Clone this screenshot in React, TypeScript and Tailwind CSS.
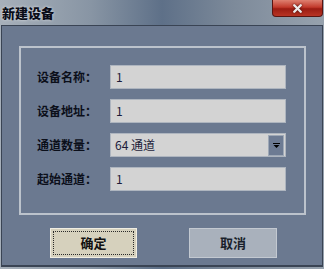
import { X } from 'lucide-react';

const font = { fontFamily: '"Noto Sans CJK SC", "Liberation Sans", sans-serif' };

function Field({ label, value }: { label: string; value: string }) {
    return (
        <div className="flex items-center h-[24px]">
            <span className="w-[73px] text-[12px] font-bold text-[#0b0f1a] leading-none">{label}</span>
            <div className="w-[176px] h-full bg-[#d3d3d3] border border-[#aeb5bf] flex items-center pl-[5px] text-[12px] text-[#1c1c3a]">
                {value}
            </div>
        </div>
    );
}

export default function App() {
    return (
        <div
            className="w-[324px] h-[269px] flex flex-col bg-[linear-gradient(90deg,#a7b0ba_0%,#8895a4_28%,#5e7088_50%,#7d8a9a_72%,#97a2ae_100%)]"
            style={font}
        >
            {/* title bar */}
            <div className="relative h-[25px] shrink-0">
                <span className="absolute left-[2px] top-[3px] text-[13px] font-black text-[#0a0d18] [text-shadow:0_0_3px_rgba(255,255,255,0.7)]">
                    新建设备
                </span>
                <div className="absolute right-[1px] top-0 w-[51px] h-[17px] rounded-b-[4px] border border-t-0 border-[#5a1410] bg-[linear-gradient(180deg,#de8070_0%,#c23a2c_45%,#9b1c12_55%,#b83424_100%)] flex items-center justify-center">
                    <X className="h-[13px] w-[13px] text-[#eceaea] drop-shadow-[0_0_1px_#3a0a06]" strokeWidth={4.5} />
                </div>
            </div>

            {/* client area */}
            <div className="ml-[1px] mr-[1px] mb-[2px] flex-1 border border-[#3a4454] border-b-2 bg-[#6b7990] flex flex-col">
                <div className="ml-[17px] mt-[20px] w-[287px] h-[169px] border-2 border-[#bcc3cc] flex flex-col pl-[16px] pt-[17px] gap-[10px]">
                    <Field label="设备名称：" value="1" />
                    <Field label="设备地址：" value="1" />
                    <div className="flex items-center h-[24px]">
                        <span className="w-[73px] text-[12px] font-bold text-[#0b0f1a] leading-none">通道数量：</span>
                        <div className="w-[176px] h-full bg-[#d3d3d3] border border-[#aeb5bf] flex items-center pl-[4px] text-[12px] text-[#1c1c3a]">
                            <span className="flex-1">64 通道</span>
                            <div className="w-[16px] h-[21px] mr-[1px] bg-[#6d7b93] border border-[#9ea8b6] flex items-center justify-center">
                                <svg width="7" height="5" viewBox="0 0 7 5">
                                    <rect x="0" y="0" width="7" height="1" fill="#000" />
                                    <polygon points="0.5,2 6.5,2 3.5,5" fill="#000" />
                                </svg>
                            </div>
                        </div>
                    </div>
                    <Field label="起始通道：" value="1" />
                </div>

                <div className="flex mt-[13px] ml-[48px] gap-[52px]">
                    <button className="w-[87px] h-[30px] bg-[#d6d1bd] border border-[#f0ede2] p-[2px]">
                        <div className="w-full h-full border border-dotted border-[#2a2a2a] flex items-center justify-center text-[13px] font-bold text-[#111]">
                            确定
                        </div>
                    </button>
                    <button className="w-[88px] h-[30px] bg-[#a9b1bc] border border-[#c3c9d1] flex items-center justify-center text-[13px] font-bold text-[#1a1f2b]">
                        取消
                    </button>
                </div>
            </div>
        </div>
    );
}
